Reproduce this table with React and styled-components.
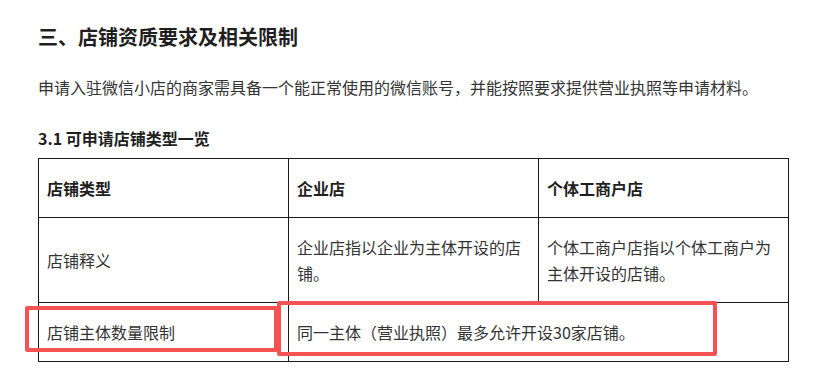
import React from "react";
import styled, { createGlobalStyle } from "styled-components";

const GlobalStyle = createGlobalStyle`
	body {
		margin: 0;
		background: #fff;
		font-family: "Noto Sans CJK SC", "Noto Sans", sans-serif;
		color: #333;
	}
`;

const rows = [
	{ label: "店铺释义", cells: ["企业店指以企业为主体开设的店铺。", "个体工商户店指以个体工商户为主体开设的店铺。"] },
];

function App() {
	return (
		<>
			<GlobalStyle />
			<Page>
				<Heading>三、店铺资质要求及相关限制</Heading>
				<Paragraph>
					申请入驻微信小店的商家需具备一个能正常使用的微信账号，并能按照要求提供营业执照等申请材料。
				</Paragraph>
				<SubHeading>3.1 可申请店铺类型一览</SubHeading>
				<TableWrap>
					<Table>
						<colgroup>
							<col style={{ width: 250 }} />
							<col style={{ width: 250 }} />
							<col style={{ width: 250 }} />
						</colgroup>
						<thead>
							<tr>
								<Th>店铺类型</Th>
								<Th>企业店</Th>
								<Th>个体工商户店</Th>
							</tr>
						</thead>
						<tbody>
							{rows.map((r) => (
								<tr key={r.label}>
									<Td>{r.label}</Td>
									{r.cells.map((c) => (
										<Td key={c}>{c}</Td>
									))}
								</tr>
							))}
							<tr>
								<Td>店铺主体数量限制</Td>
								<Td colSpan={2}>同一主体（营业执照）最多允许开设30家店铺。</Td>
							</tr>
						</tbody>
					</Table>
					{/* annotation boxes over the last row */}
					<Mark $left={-13} $top={148} $w={253} $h={46} />
					<Mark $left={239} $top={143} $w={440} $h={55} />
				</TableWrap>
			</Page>
		</>
	);
}

export default App;

const Page = styled.div`
	padding: 23px 38px 0;
	display: flex;
	flex-direction: column;
	align-items: flex-start;
`;

const Heading = styled.h2`
	margin: 0;
	font-size: 20px;
	line-height: 28px;
	font-weight: 700;
	color: #1f1f1f;
`;

const Paragraph = styled.p`
	margin: 23px 0 0;
	font-size: 16px;
	line-height: 26px;
	color: #333;
`;

const SubHeading = styled.h3`
	margin: 26px 0 0;
	font-size: 16px;
	line-height: 24px;
	font-weight: 700;
	color: #1f1f1f;
`;

const TableWrap = styled.div`
	position: relative;
	margin-top: 8px;
`;

const Table = styled.table`
	border-collapse: collapse;
	table-layout: fixed;
	width: 751px;
	font-size: 16px;
	line-height: 26px;
`;

const Th = styled.th`
	border: 1px solid #1a1a1a;
	padding: 16px 8px;
	text-align: left;
	font-weight: 700;
	color: #1f1f1f;
	vertical-align: middle;
`;

const Td = styled.td`
	border: 1px solid #1a1a1a;
	padding: 16px 8px;
	color: #333;
	vertical-align: middle;
`;

const Mark = styled.div`
	position: absolute;
	left: ${(p) => p.$left}px;
	top: ${(p) => p.$top}px;
	width: ${(p) => p.$w}px;
	height: ${(p) => p.$h}px;
	box-sizing: border-box;
	border: 4px solid #f55353;
	border-radius: 2px;
	pointer-events: none;
`;
